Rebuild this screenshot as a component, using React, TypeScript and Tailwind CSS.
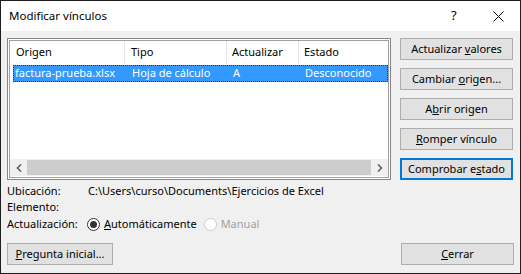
import React from 'react';

const font = { fontFamily: '"Noto Sans", "Segoe UI", sans-serif' };

function Btn({ children, focused }: { children: React.ReactNode; focused?: boolean }) {
  return (
    <div
      className={`h-[22px] flex items-center justify-center bg-[#e1e1e1] text-[11px] text-black ${
        focused ? 'border-2 border-[#0078d7]' : 'border border-[#adadad]'
      }`}
    >
      {children}
    </div>
  );
}

function Radio({ checked, disabled, children }: { checked?: boolean; disabled?: boolean; children: React.ReactNode }) {
  return (
    <div className={`flex items-center gap-[4px] ${disabled ? 'text-[#a0a0a0]' : 'text-black'}`}>
      <div
        className={`w-[13px] h-[13px] rounded-full border bg-white flex items-center justify-center ${
          disabled ? 'border-[#cccccc]' : 'border-[#333333]'
        }`}
      >
        {checked && <div className="w-[7px] h-[7px] rounded-full bg-[#333333]" />}
      </div>
      <span>{children}</span>
    </div>
  );
}

export default function App() {
  return (
    <div className="w-[521px] h-[274px] border border-[#1e1e1e] bg-[#f0f0f0] flex flex-col text-[11px]" style={font}>
      {/* title bar */}
      <div className="h-[30px] bg-white flex items-center pl-[8px] shrink-0">
        <span className="flex-1 text-[11.5px] text-black">Modificar vínculos</span>
        <span className="w-[12px] text-[13px] text-black mr-[30px]">?</span>
        <svg width="11" height="11" viewBox="0 0 11 11" className="mr-[16px]">
          <path d="M0.5 0.5 L10.5 10.5 M10.5 0.5 L0.5 10.5" stroke="#000" strokeWidth="1" />
        </svg>
      </div>

      <div className="flex-1 px-[6px] pt-[7px] flex flex-col">
        <div className="flex gap-[9px]">
          {/* left column */}
          <div className="w-[384px]">
            <div className="h-[142px] border border-[#828790] bg-white p-[1px]">
              <div className="h-full border border-[#a0a0a0] flex flex-col">
                <div className="h-[23px] flex items-stretch text-black">
                  <div className="w-[115px] pl-[6px] flex items-center border-r border-[#e5e5e5]">Origen</div>
                  <div className="w-[102px] pl-[6px] flex items-center border-r border-[#e5e5e5]">Tipo</div>
                  <div className="w-[72px] pl-[5px] flex items-center border-r border-[#e5e5e5]">Actualizar</div>
                  <div className="flex-1 pl-[5px] flex items-center">Estado</div>
                </div>
                <div className="mt-[1px] ml-[3px] h-[17px] bg-[#3399ff] border border-dotted border-[#0b3c73] flex items-center text-white">
                  <div className="w-[112px] pl-[1px]">factura-prueba.xlsx</div>
                  <div className="w-[102px] pl-[6px]">Hoja de cálculo</div>
                  <div className="w-[72px] pl-[5px]">A</div>
                  <div className="flex-1 pl-[5px]">Desconocido</div>
                </div>
                <div className="flex-1" />
                <div className="h-[17px] bg-[#f0f0f0] flex items-center mb-[1px]">
                  <div className="w-[17px] flex items-center justify-center">
                    <svg width="6" height="8" viewBox="0 0 6 8">
                      <path d="M5 0.5 L1.5 4 L5 7.5" stroke="#606060" strokeWidth="1.6" fill="none" />
                    </svg>
                  </div>
                  <div className="flex-1 h-[15px] bg-[#cdcdcd]" />
                  <div className="w-[17px] flex items-center justify-center">
                    <svg width="6" height="8" viewBox="0 0 6 8">
                      <path d="M1 0.5 L4.5 4 L1 7.5" stroke="#606060" strokeWidth="1.6" fill="none" />
                    </svg>
                  </div>
                </div>
              </div>
            </div>

            <div className="mt-[3px] text-black">
              <div className="h-[16px] flex items-center">
                <span className="w-[81px]">Ubicación:</span>
                <span>C:\Users\curso\Documents\Ejercicios de Excel</span>
              </div>
              <div className="h-[16px] flex items-center">Elemento:</div>
              <div className="h-[19px] flex items-center">
                <span className="w-[80px]">Actualización:</span>
                <div className="flex items-center gap-[7px]">
                  <Radio checked>
                    <span className="underline">A</span>utomáticamente
                  </Radio>
                  <Radio disabled>Manual</Radio>
                </div>
              </div>
            </div>
          </div>

          {/* right buttons */}
          <div className="w-[113px] flex flex-col gap-[8px]">
            <Btn>
              Actualizar&nbsp;<span className="underline">v</span>alores
            </Btn>
            <Btn>
              Cambiar&nbsp;<span className="underline">o</span>rigen...
            </Btn>
            <Btn>
              A<span className="underline">b</span>rir origen
            </Btn>
            <Btn>
              <span className="underline">R</span>omper vínculo
            </Btn>
            <Btn focused>
              Comprobar e<span className="underline">s</span>tado
            </Btn>
          </div>
        </div>

        <div className="mt-[9px] flex justify-between">
          <div className="w-[106px]">
            <Btn>
              <span className="underline">P</span>regunta inicial...
            </Btn>
          </div>
          <div className="w-[113px]">
            <Btn>
              <span className="underline">C</span>errar
            </Btn>
          </div>
        </div>
      </div>
    </div>
  );
}
